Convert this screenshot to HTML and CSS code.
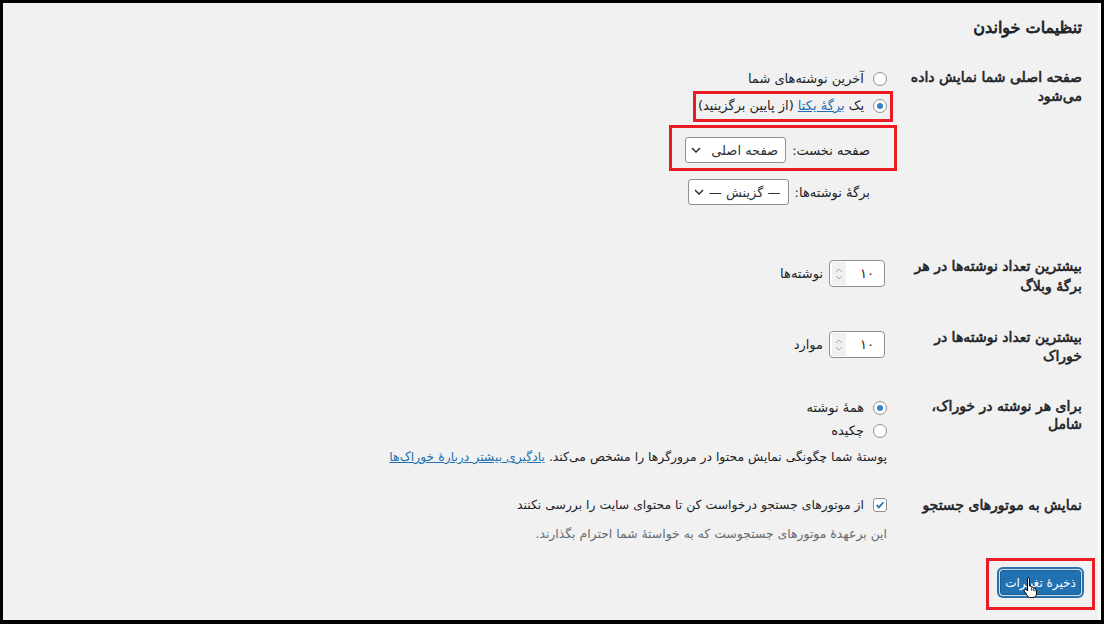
FILE: index.html
```html
<!DOCTYPE html>
<html lang="fa" dir="rtl">
<head>
<meta charset="utf-8">
<title>تنظیمات خواندن</title>
<link rel="stylesheet" href="styles.css">
</head>
<body>
<div class="frame">
  <h1 class="title">تنظیمات خواندن</h1>
  <div class="form">
    <div class="row row-front">
      <div class="th">صفحه اصلی شما نمایش داده<br>می‌شود</div>
      <div class="td">
        <label class="opt first"><span class="radio"></span><span>آخرین نوشته‌های شما</span></label>
        <label class="opt opt-page hl hl-one"><span class="radio on"></span><span>یک <a href="#" class="link">برگهٔ یکتا</a> (از پایین برگزینید)</span></label>
        <div class="pages">
          <div class="page-row hl hl-two"><span class="plabel">صفحه نخست:</span><span class="select"><span>صفحه اصلی</span><svg class="chev" viewBox="0 0 10 6" width="10" height="6"><path d="M1 1l4 4 4-4" fill="none" stroke="#2c3338" stroke-width="1.5"/></svg></span></div>
          <div class="page-row second"><span class="plabel">برگهٔ نوشته‌ها:</span><span class="select"><span>— گزینش —</span><svg class="chev" viewBox="0 0 10 6" width="10" height="6"><path d="M1 1l4 4 4-4" fill="none" stroke="#2c3338" stroke-width="1.5"/></svg></span></div>
        </div>
      </div>
    </div>

    <div class="row row-blog">
      <div class="th">بیشترین تعداد نوشته‌ها در هر<br>برگهٔ وبلاگ</div>
      <div class="td">
        <div class="numrow"><span class="num"><span class="val">۱۰</span><span class="spin"><svg viewBox="0 0 8 14" width="8" height="14"><path d="M1 5l3-3 3 3M1 9l3 3 3-3" fill="none" stroke="#a7aaad" stroke-width="1"/></svg></span></span><span>نوشته‌ها</span></div>
      </div>
    </div>

    <div class="row row-feed">
      <div class="th">بیشترین تعداد نوشته‌ها در<br>خوراک</div>
      <div class="td">
        <div class="numrow"><span class="num"><span class="val">۱۰</span><span class="spin"><svg viewBox="0 0 8 14" width="8" height="14"><path d="M1 5l3-3 3 3M1 9l3 3 3-3" fill="none" stroke="#a7aaad" stroke-width="1"/></svg></span></span><span>موارد</span></div>
      </div>
    </div>

    <div class="row row-include">
      <div class="th">برای هر نوشته در خوراک،<br>شامل</div>
      <div class="td">
        <label class="opt small"><span class="radio on"></span><span>همهٔ نوشته</span></label>
        <label class="opt small"><span class="radio"></span><span>چکیده</span></label>
        <p class="desc">پوستهٔ شما چگونگی نمایش محتوا در مرورگرها را مشخص می‌کند. <a href="#" class="link">یادگیری بیشتر دربارهٔ خوراک‌ها</a></p>
      </div>
    </div>

    <div class="row row-search">
      <div class="th">نمایش به موتورهای جستجو</div>
      <div class="td">
        <label class="opt check-row"><span class="checkbox"><svg viewBox="0 0 14 14" width="14" height="14"><path d="M3 7.2l2.6 2.6L11 3.8" fill="none" stroke="#2271b1" stroke-width="2"/></svg></span><span>از موتورهای جستجو درخواست کن تا محتوای سایت را بررسی نکنند</span></label>
        <p class="desc muted">این برعهدهٔ موتورهای جستجوست که به خواستهٔ شما احترام بگذارند.</p>
      </div>
    </div>
  </div>

  <div class="submit">
    <button class="btn hl hl-three" type="button">ذخیرهٔ تغییرات</button>
    <svg class="cursor" viewBox="0 0 16 22" width="16" height="22"><path d="M5 1.5c.9 0 1.5.6 1.5 1.5v7l.6-.1c.9 0 1.4.5 1.5 1.1.9-.2 1.6.3 1.7 1 .9-.1 1.6.4 1.7 1.2.8 0 1.5.5 1.5 1.4v3.2c0 2-1.4 3.7-3.6 3.7H7.3c-1.2 0-2-.5-2.7-1.5L1.6 15.6c-.5-.7-.3-1.5.3-1.9.6-.4 1.3-.3 1.8.2l.8 1V3c0-.9.6-1.5 1.5-1.5z" fill="#fff" stroke="#000" stroke-width="1"/><path d="M8.6 11.6v3M10.3 12.6v2.4M12 13.8v1.6" stroke="#000" stroke-width="0.8"/></svg>
  </div>
</div>
</body>
</html>
```

FILE: styles.css
```css
html, body {
  margin: 0;
  padding: 0;
  background: #000;
}

.frame {
  position: relative;
  width: 1104px;
  height: 624px;
  box-sizing: border-box;
  border-style: solid;
  border-color: #000;
  border-width: 3px 3px 4px 3px;
  background: #f1f1f1;
  box-shadow: inset -3px 0 0 #fbfbfb;
  padding: 0 19px 0 0;
  direction: rtl;
  font-family: "DejaVu Sans", sans-serif;
  font-size: 13px;
  color: #1d2327;
  overflow: hidden;
}

.title {
  margin: 0;
  padding-top: 12px;
  font-size: 16px;
  line-height: 26px;
  font-weight: 400;
  -webkit-text-stroke: 0.8px #1d2327;
  color: #1d2327;
}

.row {
  display: grid;
  grid-template-columns: 195px 1fr;
  align-items: start;
}

.th {
  font-weight: 400;
  font-size: 14px;
  line-height: 19px;
  white-space: nowrap;
  -webkit-text-stroke: 0.6px #1d2327;
}

.td {
  display: flex;
  flex-direction: column;
  align-items: flex-start;
}

.opt {
  position: relative;
  display: inline-flex;
  align-items: center;
  gap: 9px;
  height: 28px;
  line-height: 20px;
  white-space: nowrap;
}

.opt.first {
  height: 27px;
}

.opt.small {
  height: 23px;
}

.radio {
  width: 14px;
  height: 14px;
  box-sizing: border-box;
  border: 1px solid #8c8f94;
  border-radius: 50%;
  background: #fff;
  display: inline-flex;
  align-items: center;
  justify-content: center;
  flex: none;
}

.radio.on::before {
  content: "";
  width: 6px;
  height: 6px;
  border-radius: 50%;
  background: #3582c4;
}

.link {
  color: #2271b1;
  text-decoration: underline;
}

.hl::after {
  content: "";
  position: absolute;
  border: 3px solid #ec1c24;
  pointer-events: none;
}

.hl-one::after {
  top: -1px;
  bottom: -2px;
  right: -6px;
  left: -5px;
}

.pages {
  padding-right: 17px;
  margin-top: 17px;
  display: flex;
  flex-direction: column;
  align-items: flex-start;
  gap: 16px;
}

.page-row {
  position: relative;
  display: inline-flex;
  align-items: center;
  gap: 6px;
  height: 26px;
  white-space: nowrap;
}

.hl-two::after {
  top: -12px;
  bottom: -8px;
  right: -27px;
  left: -16px;
}

.select {
  display: inline-flex;
  align-items: center;
  justify-content: space-between;
  box-sizing: border-box;
  width: 101px;
  height: 26px;
  padding: 0 7px 0 5px;
  border: 1px solid #8c8f94;
  border-radius: 3px;
  background: #fff;
  font-size: 13px;
  color: #2c3338;
  white-space: nowrap;
}

.chev {
  flex: none;
}

.row-front .th { padding-top: 27px; }
.row-front .td { padding-top: 24px; }

.row-blog .th { padding-top: 51px; line-height: 20px; }
.row-blog .td { padding-top: 55px; }

.row-feed .th { padding-top: 32px; }
.row-feed .td { padding-top: 35px; }

.row-include .th { padding-top: 31px; line-height: 18px; }
.row-include .td { padding-top: 30px; }

.row-search .th { padding-top: 30px; }
.row-search .td { padding-top: 29px; }

.numrow {
  display: inline-flex;
  align-items: center;
  gap: 6px;
  margin-right: 2px;
  white-space: nowrap;
}

.num {
  display: inline-flex;
  align-items: center;
  justify-content: space-between;
  box-sizing: border-box;
  width: 56px;
  height: 27px;
  padding: 0 10px 0 2px;
  border: 1px solid #8c8f94;
  border-radius: 4px;
  background: #fff;
}

.spin {
  display: inline-flex;
  align-items: center;
  justify-content: center;
  width: 14px;
  height: 23px;
  background: #f0f0f1;
}

.desc {
  margin: 6px 0 0;
  line-height: 18px;
  font-size: 12.4px;
  white-space: nowrap;
}

.check-row {
  height: 20px;
  font-size: 12.4px;
}

.checkbox {
  width: 14px;
  height: 14px;
  box-sizing: border-box;
  border: 1px solid #8c8f94;
  border-radius: 3px;
  background: #fff;
  display: inline-flex;
  align-items: center;
  justify-content: center;
  flex: none;
}

.checkbox svg {
  width: 12px;
  height: 12px;
}

.muted {
  margin-top: 10px;
  color: #646970;
}

.submit {
  position: relative;
  margin-top: 27px;
  padding-right: 1px;
}

.btn {
  position: relative;
  box-sizing: border-box;
  width: 81px;
  height: 25px;
  border: 1px solid #1d5f92;
  border-radius: 3px;
  background: #2271b1;
  color: #fff;
  font-family: "DejaVu Sans", sans-serif;
  font-size: 12px;
  padding: 0;
  white-space: nowrap;
  box-shadow: 0 0 0 1px #cfe0ee, 0 0 0 3px #2a72ae;
}

.hl-three::after {
  top: -13px;
  bottom: -16px;
  left: -15px;
  right: -15px;
}

.cursor {
  position: absolute;
  top: 6px;
  right: 43px;
}
```
